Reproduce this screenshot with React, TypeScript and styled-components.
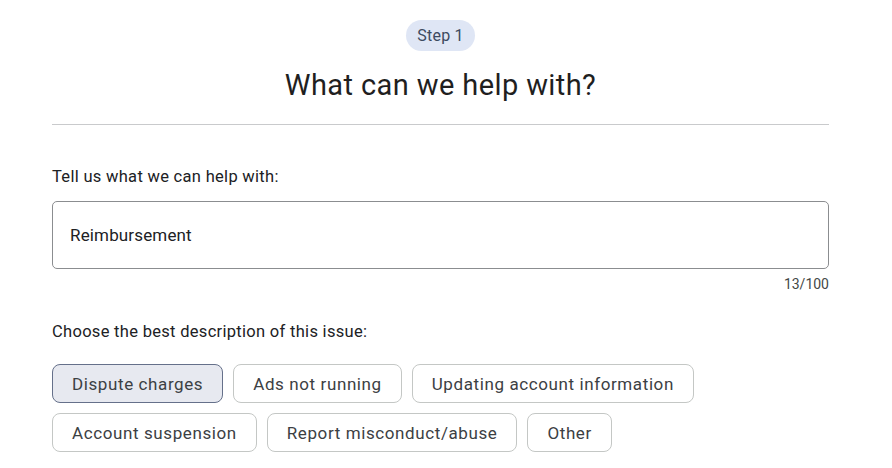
import React from 'react';
import styled, { createGlobalStyle } from 'styled-components';

const GlobalStyle = createGlobalStyle`
  html, body {
    margin: 0;
    padding: 0;
    background: #ffffff;
  }
  body {
    font-family: Roboto, "Noto Sans", Arial, sans-serif;
    color: #202124;
  }
`;

const Page = styled.div`
  width: 777px;
  margin-left: 52px;
  padding-top: 20px;
`;

const Header = styled.div`
  display: flex;
  flex-direction: column;
  align-items: center;
  padding-bottom: 22px;
  border-bottom: 1px solid #c9cacc;
`;

const StepPill = styled.div`
  height: 31px;
  padding: 0 11px;
  border-radius: 16px;
  background: #dfe6f5;
  color: #3d4a60;
  font-size: 16px;
  letter-spacing: 0.2px;
  display: flex;
  align-items: center;
`;

const Title = styled.h1`
  margin: 17px 0 0;
  font-size: 29px;
  font-weight: 400;
  letter-spacing: 0.4px;
  color: #1f1f1f;
  line-height: 34px;
`;

const Label = styled.div`
  font-size: 16.5px;
  letter-spacing: 0.3px;
  color: #202124;
  line-height: 20px;
`;

const Section = styled.div`
  padding-top: 42px;
`;

const InputBox = styled.div`
  margin-top: 14px;
  height: 66px;
  border: 1px solid #8b8d90;
  border-radius: 5px;
  display: flex;
  align-items: center;
  padding: 0 17px;
  font-size: 17px;
  letter-spacing: 0.15px;
  color: #202124;
`;

const Counter = styled.div`
  text-align: right;
  font-size: 14px;
  color: #444746;
  margin-top: 6px;
  line-height: 18px;
`;

const ChipSection = styled.div`
  padding-top: 29px;
`;

const ChipGrid = styled.div`
  margin-top: 22px;
  display: flex;
  flex-wrap: wrap;
  gap: 10px;
`;

const Chip = styled.button<{ $selected?: boolean }>`
  height: 39px;
  padding: 0 19px;
  border-radius: 8px;
  border: 1px solid ${p => (p.$selected ? '#65708a' : '#c4c7c5')};
  background: ${p => (p.$selected ? '#e7e9f0' : '#ffffff')};
  color: #3c4043;
  font-family: Roboto, "Noto Sans", Arial, sans-serif;
  font-size: 17px;
  letter-spacing: 0.6px;
  cursor: pointer;
`;

const options = [
  'Dispute charges',
  'Ads not running',
  'Updating account information',
  'Account suspension',
  'Report misconduct/abuse',
  'Other',
];

export default function App() {
  return (
    <>
      <GlobalStyle />
      <Page>
        <Header>
          <StepPill>Step 1</StepPill>
          <Title>What can we help with?</Title>
        </Header>

        <Section>
          <Label>Tell us what we can help with:</Label>
          <InputBox>Reimbursement</InputBox>
          <Counter>13/100</Counter>
        </Section>

        <ChipSection>
          <Label>Choose the best description of this issue:</Label>
          <ChipGrid>
            {options.map((o, i) => (
              <Chip key={o} $selected={i === 0}>
                {o}
              </Chip>
            ))}
          </ChipGrid>
        </ChipSection>
      </Page>
    </>
  );
}
